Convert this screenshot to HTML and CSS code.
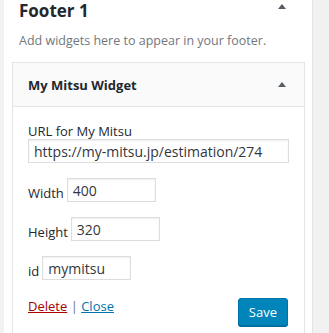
FILE: index.html
```html
<!DOCTYPE html>
<html>
<head>
  <meta charset="UTF-8">
  <title>Widgets</title>
  <link rel="stylesheet" href="styles.css">
</head>
<body>
  <div class="page">
    <div class="sidebar">
      <div class="sidebar-head">
        <h2>Footer 1</h2>
        <span class="arrow"></span>
      </div>
      <p class="sidebar-desc">Add widgets here to appear in your footer.</p>

      <div class="widget">
        <div class="widget-top">
          <h3>My Mitsu Widget</h3>
          <span class="arrow"></span>
        </div>
        <div class="widget-inside">
          <p class="field">
            <label for="url">URL for My Mitsu</label>
            <input id="url" class="wide" type="text" value="https://my-mitsu.jp/estimation/274">
          </p>
          <p class="field inline">
            <label for="w">Width</label>
            <input id="w" class="small" type="text" value="400">
          </p>
          <p class="field inline">
            <label for="h">Height</label>
            <input id="h" class="small" type="text" value="320">
          </p>
          <p class="field inline">
            <label for="id">id</label>
            <input id="id" class="small" type="text" value="mymitsu">
          </p>
          <div class="widget-control">
            <div class="links">
              <a href="#" class="delete">Delete</a> | <a href="#" class="close">Close</a>
            </div>
            <button class="save">Save</button>
          </div>
        </div>
      </div>
    </div>
    <div class="gutter"></div>
  </div>
</body>
</html>
```

FILE: styles.css
```css
/* page */
body {
  margin: 0;
  background: #f1f1f1;
  font-family: "Open Sans", "Noto Sans", sans-serif;
  color: #23282d;
}

.page {
  display: flex;
  height: 333px;
  overflow: hidden;
}

/* sidebar panel */
.sidebar {
  width: 309px;
  margin-left: 4px;
  background: #fff;
  border-right: 1px solid #e5e5e5;
  padding: 0 7px 0 8px;
  box-sizing: border-box;
}

.sidebar-head {
  display: flex;
  justify-content: space-between;
  align-items: flex-start;
  padding: 1px 0 0 7px;
}

.sidebar-head h2 {
  margin: 0;
  font-size: 17px;
  font-weight: bold;
  line-height: 20px;
}

.sidebar-head .arrow {
  margin: 3px 19px 0 0;
}

.arrow {
  width: 0;
  height: 0;
  border-left: 4px solid transparent;
  border-right: 4px solid transparent;
  border-bottom: 5px solid #555d66;
}

.sidebar-desc {
  margin: 11px 0 13px 7px;
  font-size: 12.5px;
  color: #72777c;
}

/* widget */
.widget {
  border: 1px solid #e5e5e5;
  background: #fff;
}

.widget-top {
  display: flex;
  justify-content: space-between;
  align-items: center;
  height: 43px;
  padding: 0 18px 0 15px;
  background: #fafafa;
  border-bottom: 1px solid #e5e5e5;
}

.widget-top h3 {
  margin: 0;
  font-size: 13px;
  font-weight: bold;
}

.widget-inside {
  padding: 16px 16px 20px 15px;
}

.field {
  margin: 0 0 15px;
  font-size: 13px;
}

.field label {
  display: block;
  line-height: 16px;
}

.field.inline {
  display: flex;
  align-items: flex-end;
  gap: 3px;
}

.field.inline label {
  line-height: 18px;
}

input {
  font-family: inherit;
  font-size: 14px;
  color: #32373c;
  border: 1px solid #ddd;
  box-shadow: inset 0 1px 2px rgba(0, 0, 0, 0.07);
  padding: 2px 5px;
  height: 24px;
  box-sizing: border-box;
  margin: 0;
}

input.wide {
  width: 261px;
}

input.small {
  width: 89px;
}

.widget-control {
  display: flex;
  justify-content: space-between;
  align-items: flex-start;
  margin-top: 9px;
}

.links {
  font-size: 13px;
  color: #72777c;
  padding-top: 2px;
}

.links .delete {
  color: #a00;
}

.links .close {
  color: #0073aa;
}

.save {
  font-family: inherit;
  font-size: 13px;
  color: #fff;
  background: #0085ba;
  border: 1px solid #0073aa;
  border-radius: 3px;
  box-shadow: 0 1px 0 #006799;
  height: 28px;
  padding: 0 10px;
  margin-top: 3px;
}

.gutter {
  flex: 1;
}
```
